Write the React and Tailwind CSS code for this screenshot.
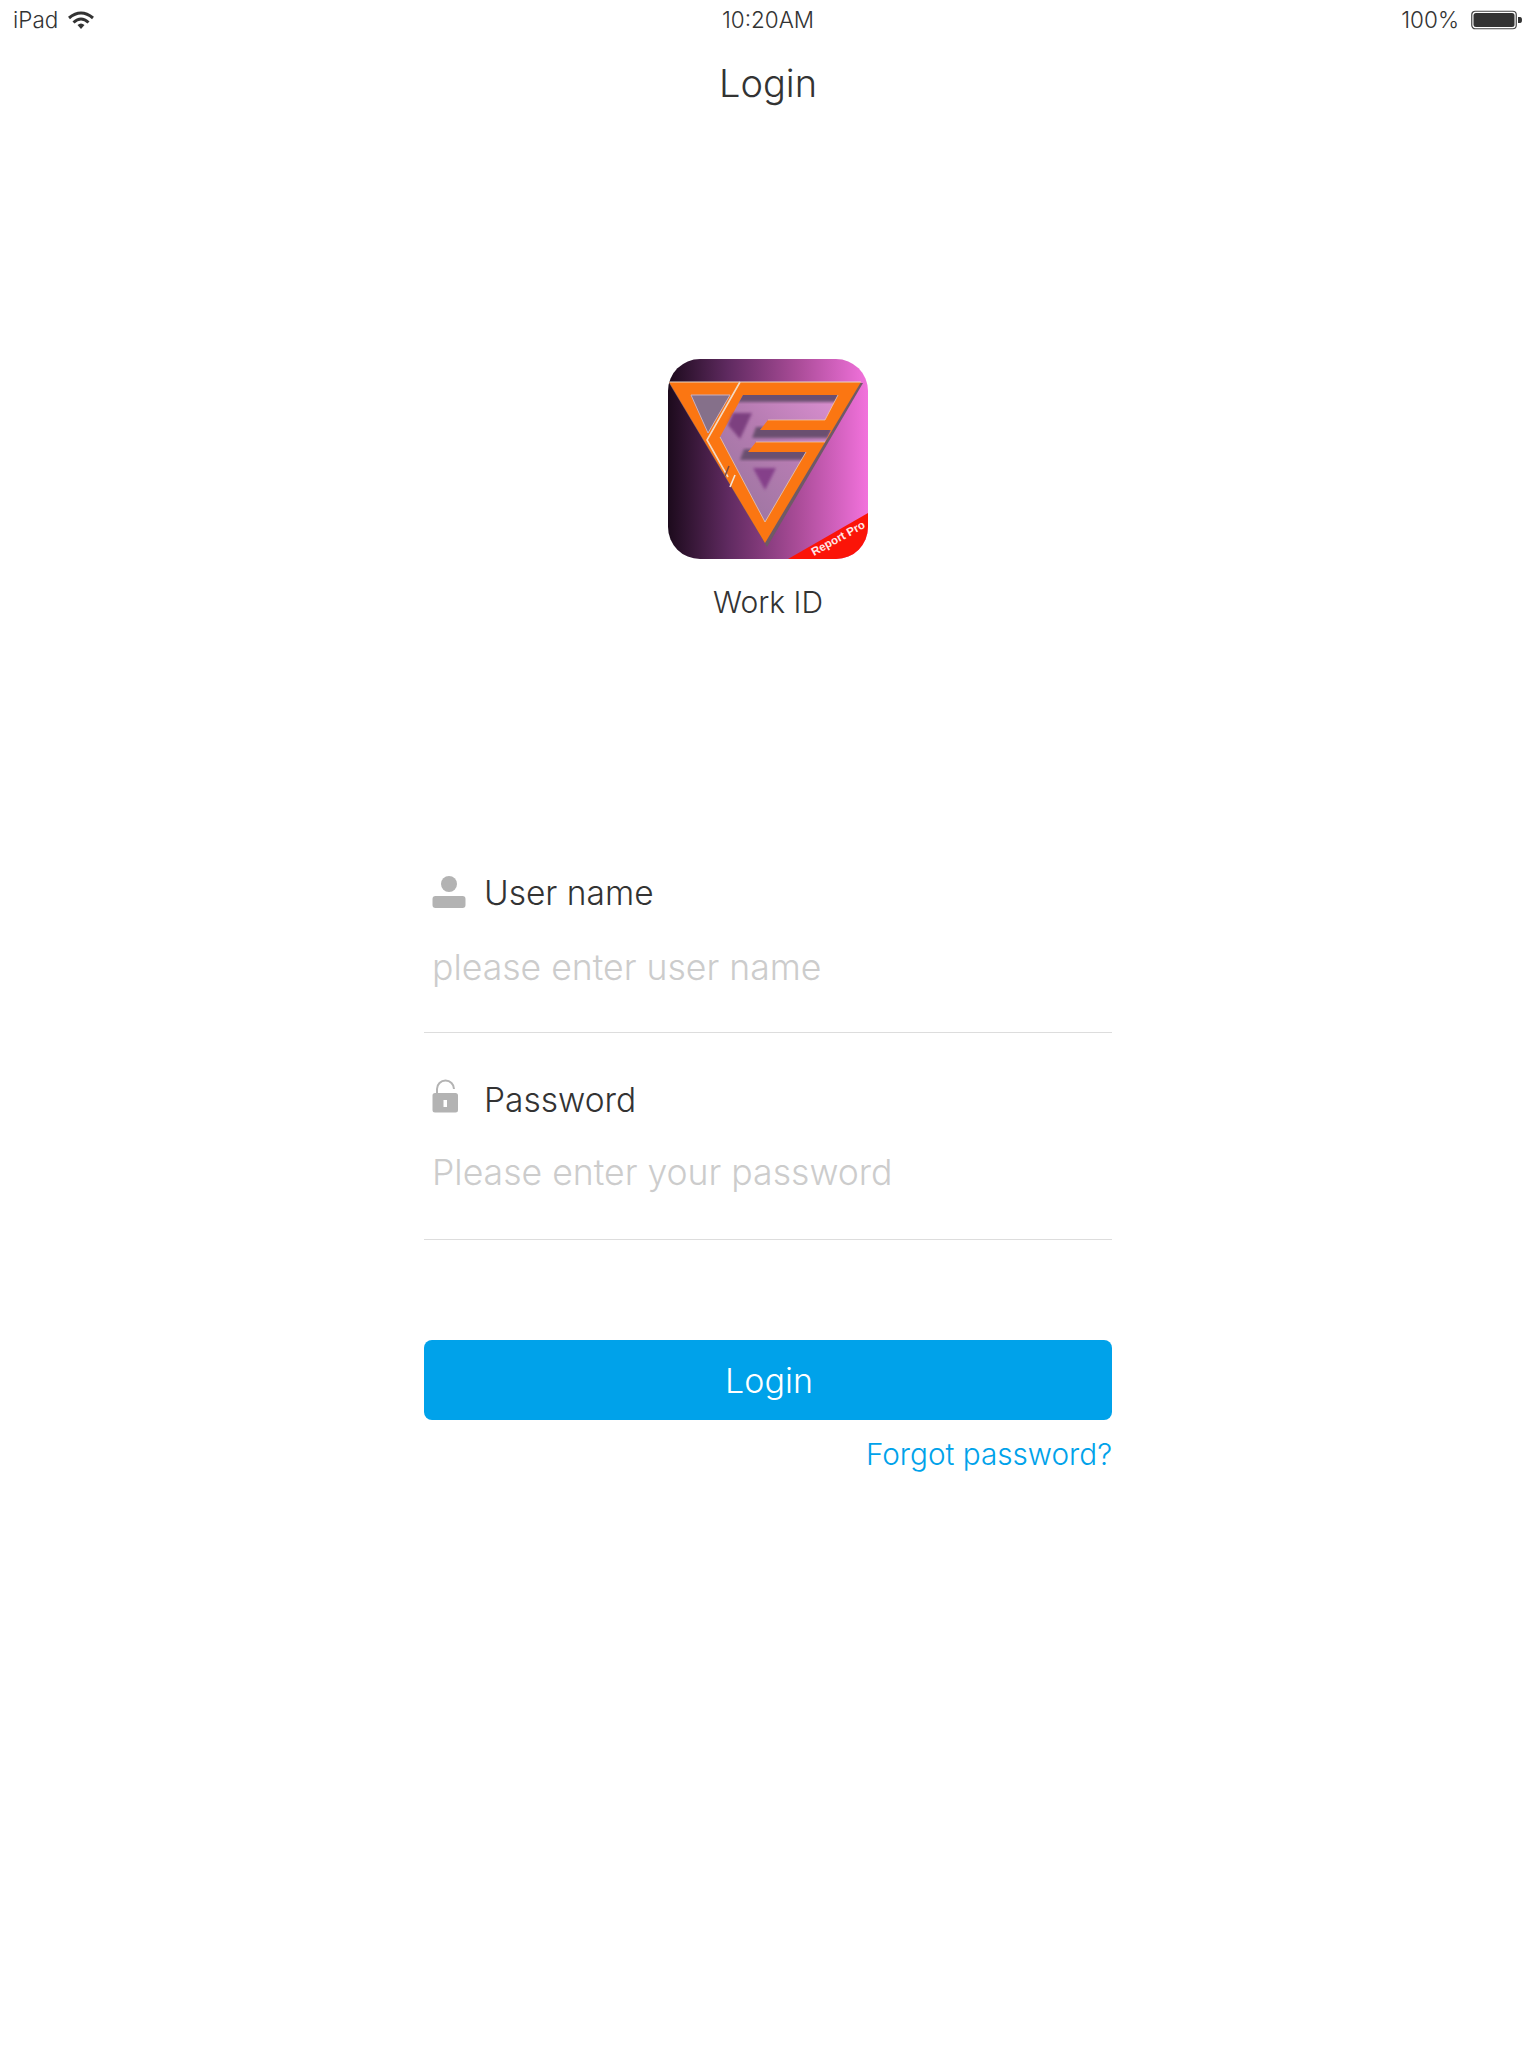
function Wifi() {
  return (
    <svg width="28" height="20" viewBox="0 0 28 20" fill="none" stroke="#333" strokeWidth="3">
      <path d="M2 8 Q14 -2 26 8" />
      <path d="M6.5 12.5 Q14 5.5 21.5 12.5" />
      <path d="M10.5 15 L14 19 L17.5 15 Q14 12 10.5 15 Z" fill="#333" stroke="none" />
    </svg>
  );
}

function Battery() {
  return (
    <svg width="52" height="20" viewBox="0 0 52 20">
      <rect x="0.75" y="1.25" width="44.5" height="17.5" rx="3.5" fill="none" stroke="#444" strokeWidth="1.2" />
      <rect x="2.5" y="3" width="41" height="14" rx="2.5" fill="#333" />
      <path d="M47 7 h2 a2 3 0 0 1 0 6 h-2 z" fill="#333" />
    </svg>
  );
}

function UserIcon() {
  return (
    <svg width="34" height="34" viewBox="0 0 34 34" fill="#b3b3b3">
      <circle cx="17" cy="9" r="8" />
      <rect x="0.5" y="21" width="33" height="12" rx="3" />
    </svg>
  );
}

function LockIcon() {
  return (
    <svg width="28" height="34" viewBox="0 0 28 34">
      <path d="M5 14 V10 a8.500 8.500 0 0 1 17 0" fill="none" stroke="#b3b3b3" strokeWidth="2" />
      <path fillRule="evenodd" fill="#b3b3b3" d="M3 14 H23.5 a2.5 2.5 0 0 1 2.5 2.5 V31 a2.5 2.5 0 0 1 -2.5 2.5 H3 a2.5 2.5 0 0 1 -2.5 -2.5 V16.500 a2.500 2.500 0 0 1 2.500 -2.500 Z M11.500 21 V28 H15 V21 Z" />
    </svg>
  );
}

function Logo() {
  return (
    <svg width="200" height="200" viewBox="0 0 200 200" className="rounded-[32px]">
      <defs>
        <linearGradient id="bg" x1="0" y1="0" x2="1" y2="0">
          <stop offset="0" stopColor="#1c0a1c" />
          <stop offset="0.3" stopColor="#5f2a60" />
          <stop offset="0.65" stopColor="#aa4c98" />
          <stop offset="1" stopColor="#f272dc" />
        </linearGradient>
        <linearGradient id="inner" x1="0" y1="1" x2="1" y2="0">
          <stop offset="0" stopColor="#96749c" />
          <stop offset="0.55" stopColor="#b67cb2" />
          <stop offset="1" stopColor="#dc90d2" />
        </linearGradient>
        <filter id="soft"><feGaussianBlur stdDeviation="1.5" /></filter>
        <clipPath id="innerClip">
          <polygon points="75,36 170,36 157,61 100,61 92,71 163,71 157,83 88,83 80,93 138,93 97,163 52,78" />
        </clipPath>
      </defs>
      <rect width="200" height="200" fill="url(#bg)" />
      <polygon points="1,24 195,24 99,188" fill="#6f5a66" />
      <polygon points="1,23 193,23 97,184" fill="#fb7612" />
      <polygon points="23,36 62,36 40,74" fill="#85708a" stroke="#c9b0c0" strokeWidth="1" />
      <polygon points="75,36 170,36 157,61 100,61 92,71 163,71 157,83 88,83 80,93 138,93 97,163 52,78" fill="url(#inner)" />
      <g clipPath="url(#innerClip)">
        <polygon points="70,32 175,32 168,43 66,43" fill="#6a4f70" filter="url(#soft)" />
        <polygon points="88,68 166,68 160,79 84,79" fill="#6a4f70" filter="url(#soft)" />
        <polygon points="76,90 142,90 136,101 72,101" fill="#6a4f70" filter="url(#soft)" />
      </g>
      <polygon points="65,54 84,54 72,80 60,66" fill="#7d3f80" filter="url(#soft)" />
      <polygon points="85,109 108,109 97,131" fill="#85408a" filter="url(#soft)" />
      <path d="M72 23 L39 81 L60 118" fill="none" stroke="#f2e4d6" strokeWidth="1.6" opacity="0.9" />
      <path d="M61 107 L57 117" stroke="#7a4a40" strokeWidth="1.5" />
      <path d="M67 116 L62 128" stroke="#f2e4d6" strokeWidth="1.6" />
      <path d="M138 93 L97 163 L52 78" fill="none" stroke="#e8d4c4" strokeWidth="1" opacity="0.7" />
      <path d="M1 23 H193" stroke="#e8d8c8" strokeWidth="1.2" />
      <path d="M100 61 H157 L170 36 M88 83 H157" fill="none" stroke="#f2d0b0" strokeWidth="1" opacity="0.7" />
      <polygon points="120,200 200,154 200,200" fill="#fb1408" />
      <polygon points="182,200 200,188 200,200" fill="#e070d0" />
      <text x="146" y="197" fontSize="11.5" fontWeight="700" fill="#ffe8e8" fontFamily="'Liberation Sans', sans-serif" transform="rotate(-29 146 197)">Report Pro</text>
    </svg>
  );
}

export default function App() {
  return (
    <div className="flex flex-col items-center w-[1536px] h-[2048px] bg-white text-[#333] font-['Inter',sans-serif] font-light">
      <div className="flex w-full h-10 items-center justify-between px-[13px] text-[22.5px]">
        <div className="flex items-center gap-[9px] w-[300px]"><span>iPad</span><Wifi /></div>
        <span>10:20AM</span>
        <div className="flex items-center justify-end gap-[12px] w-[300px]"><span>100%</span><Battery /></div>
      </div>
      <h1 className="mt-[18px] text-[38px] leading-[50px] font-light">Login</h1>
      <div className="mt-[251px]"><Logo /></div>
      <div className="mt-[23px] text-[30px] leading-[40px]">Work ID</div>

      <div className="mt-[247px] w-[688px] flex flex-col">
        <div className="h-[164px] border-b border-[#ddd] pl-2 pt-[4px] flex flex-col">
          <label className="flex items-center h-[40px] text-[33.500px]">
            <span className="w-[52px] flex -mt-[3px]"><UserIcon /></span>User name
          </label>
          <input readOnly placeholder="please enter user name" className="mt-[35px] h-[40px] w-full outline-none bg-transparent text-[35.600px] placeholder:text-[#ccc]" />
        </div>
        <div className="h-[207px] border-b border-[#ddd] pl-2 flex flex-col pt-[47px]">
          <label className="flex items-center h-[40px] text-[33.500px]">
            <span className="w-[52px] flex -mt-[9px]"><LockIcon /></span>Password
          </label>
          <input readOnly placeholder="Please enter your password" className="mt-[33px] h-[40px] w-full outline-none bg-transparent text-[35.600px] placeholder:text-[#ccc]" />
        </div>
        <button className="mt-[100px] h-[80px] rounded-lg bg-[#00a2ea] text-white text-[34px] font-light pl-[2px]">Login</button>
        <a className="mt-[14px] self-end text-[29.700px] leading-[40px] text-[#00a2ea]">Forgot password?</a>
      </div>
    </div>
  );
}
